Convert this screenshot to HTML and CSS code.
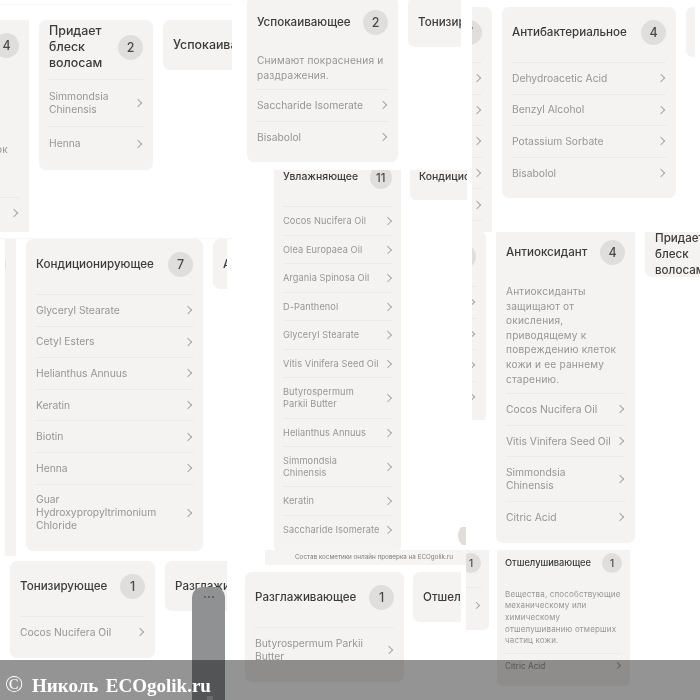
FILE: index.html
```html
<!DOCTYPE html>
<html lang="ru">
<head>
  <meta charset="UTF-8" />
  <title>Состав косметики онлайн</title>
  <link rel="stylesheet" href="styles.css">
</head>
<body>
  <div class="canvas">

    <!-- top left screenshot -->
    <div class="shot shot-a">
      <div class="card w139 cut-110 card-short">
        <div class="card-head"><span class="badge">4</span></div>
        <p class="desc desc-tail">клеток</p>
        <div class="row"></div>
      </div>
      <div class="card w114">
        <div class="card-head"><span class="title title-tall">Придает<br>блеск<br>волосам</span><span class="badge">2</span></div>
        <div class="row"><span>Simmondsia<br>Chinensis</span></div>
        <div class="row"><span>Henna</span></div>
      </div>
      <div class="card card-closed w151"><div class="card-head"><span class="title">Успокаивающее</span></div></div>
    </div>

    <!-- moisturising list, goes under the soothing card -->
    <div class="shot shot-c">
      <div class="card w127">
        <div class="card-head"><span class="title">Увлажняющее</span><span class="badge">11</span></div>
        <div class="row"><span>Cocos Nucifera Oil</span></div>
        <div class="row"><span>Olea Europaea Oil</span></div>
        <div class="row"><span>Argania Spinosa Oil</span></div>
        <div class="row"><span>D-Panthenol</span></div>
        <div class="row"><span>Glyceryl Stearate</span></div>
        <div class="row"><span>Vitis Vinifera Seed Oil</span></div>
        <div class="row"><span>Butyrospermum<br>Parkii Butter</span></div>
        <div class="row"><span>Helianthus Annuus</span></div>
        <div class="row"><span>Simmondsia<br>Chinensis</span></div>
        <div class="row"><span>Keratin</span></div>
        <div class="row"><span>Saccharide Isomerate</span></div>
      </div>
      <div class="card card-closed w151"><div class="card-head"><span class="title">Кондиционирующее</span></div></div>
    </div>
    <div class="shot shot-c-badge"><span class="badge"></span></div>

    <div class="shot shot-b">
      <div class="card w151">
        <div class="card-head"><span class="title">Успокаивающее</span><span class="badge">2</span></div>
        <p class="desc">Снимают покраснения и раздражения.</p>
        <div class="row"><span>Saccharide Isomerate</span></div>
        <div class="row"><span>Bisabolol</span></div>
      </div>
      <div class="card card-closed w145"><div class="card-head"><span class="title">Тонизирующее</span></div></div>
    </div>

    <div class="source-strip">Состав косметики онлайн проверка на ECOgolik.ru</div>

    <!-- right column slivers -->
    <div class="shot shot-e">
      <div class="card w177 cut-157">
        <div class="card-head"><span class="badge">7</span></div>
        <div class="row"></div>
        <div class="row"></div>
        <div class="row"></div>
        <div class="row"></div>
        <div class="row"></div>
        <div class="row"></div>
      </div>
    </div>
    <div class="shot shot-f">
      <div class="card w174 cut-160">
        <div class="card-head"><span class="badge"></span></div>
        <div class="row"></div>
        <div class="row"></div>
        <div class="row"></div>
        <div class="row"></div>
      </div>
    </div>

    <div class="shot shot-g">
      <div class="card w174">
        <div class="card-head"><span class="title">Антибактериальное</span><span class="badge">4</span></div>
        <div class="row"><span>Dehydroacetic Acid</span></div>
        <div class="row"><span>Benzyl Alcohol</span></div>
        <div class="row"><span>Potassium Sorbate</span></div>
        <div class="row"><span>Bisabolol</span></div>
      </div>
      <div class="card card-closed w114"></div>
    </div>

    <div class="shot shot-h">
      <div class="card w139 card-up">
        <div class="card-head"><span class="title">Антиоксидант</span><span class="badge">4</span></div>
        <p class="desc">Антиоксиданты защищают от окисления, приводящему к повреждению клеток кожи и ее раннему старению.</p>
        <div class="row"><span>Cocos Nucifera Oil</span></div>
        <div class="row"><span>Vitis Vinifera Seed Oil</span></div>
        <div class="row"><span>Simmondsia<br>Chinensis</span></div>
        <div class="row"><span>Citric Acid</span></div>
      </div>
      <div class="card card-closed card-up w114"><div class="card-head"><span class="title title-tall">Придает<br>блеск<br>волосам</span></div></div>
    </div>

    <!-- bottom row -->
    <div class="shot shot-i">
      <div class="card w127 cut-104">
        <div class="card-head"><span class="badge">1</span></div>
        <div class="row row-double"></div>
      </div>
      <div class="card w133">
        <div class="card-head"><span class="title">Отшелушивающее</span><span class="badge">1</span></div>
        <p class="desc">Вещества, способствующие<br>механическому или<br>химическому<br>отшелушиванию отмерших<br>частиц кожи.</p>
        <div class="row"><span>Citric Acid</span></div>
      </div>
    </div>

    <div class="shot shot-j">
      <div class="card w159">
        <div class="card-head"><span class="title">Разглаживающее</span><span class="badge">1</span></div>
        <div class="row"><span>Butyrospermum Parkii<br>Butter</span></div>
      </div>
      <div class="card card-closed w133"><div class="card-head"><span class="title">Отшелушивающее</span></div></div>
    </div>

    <div class="shot shot-k">
      <div class="card w100 cut-89">
        <div class="card-head"><span class="badge"></span></div>
      </div>
    </div>

    <div class="shot shot-l">
      <div class="card w177">
        <div class="card-head"><span class="title">Кондиционирующее</span><span class="badge">7</span></div>
        <div class="row"><span>Glyceryl Stearate</span></div>
        <div class="row"><span>Cetyl Esters</span></div>
        <div class="row"><span>Helianthus Annuus</span></div>
        <div class="row"><span>Keratin</span></div>
        <div class="row"><span>Biotin</span></div>
        <div class="row"><span>Henna</span></div>
        <div class="row"><span>Guar<br>Hydroxypropyltrimonium<br>Chloride</span></div>
      </div>
      <div class="card card-closed w139"><div class="card-head"><span class="title">Антиоксидант</span></div></div>
    </div>

    <div class="shot shot-m">
      <div class="card w145">
        <div class="card-head"><span class="title">Тонизирующее</span><span class="badge">1</span></div>
        <div class="row"><span>Cocos Nucifera Oil</span></div>
      </div>
      <div class="card card-closed w159"><div class="card-head"><span class="title">Разглаживающее</span></div></div>
    </div>

    <!-- phone scroll handle and watermark lie over everything -->
    <div class="handle"><span class="handle-dots"></span></div>
    <div class="watermark"><span class="copy">©</span> Николь&nbsp; ECOgolik.ru</div>
  </div>
</body>
</html>
```

FILE: styles.css
```css
* {
  box-sizing: border-box;
}

body {
  margin: 0;
  background: #fff;
}

.canvas {
  position: relative;
  width: 700px;
  height: 700px;
  overflow: hidden;
  background: #fff;
  font-family: Inter, 'Noto Sans', sans-serif;
  filter: blur(0.4px);
}

/* each pasted screenshot clips a row of cards */
.shot {
  --u: 1px;
  position: absolute;
  display: flex;
  align-items: flex-start;
  gap: 10px;
  overflow: hidden;
  background: #fff;
}

.card {
  flex: none;
  padding: 0 calc(10 * var(--u)) calc(10 * var(--u));
  background: #f4f3f2;
  border-radius: calc(7 * var(--u));
}

.card-closed {
  height: calc(50 * var(--u));
  overflow: hidden;
}

.card-short {
  height: 212px;
  overflow: hidden;
  border-radius: 0;
}

.card-up {
  margin-top: -5px;
}

.w100 { width: 100px; }
.w114 { width: 114px; }
.w127 { width: 127px; }
.w133 { width: 133px; }
.w139 { width: 139px; }
.w145 { width: 145px; }
.w151 { width: 151px; }
.w159 { width: 159px; }
.w174 { width: 174px; }
.w177 { width: 177px; }

.cut-89 { margin-left: -89px; }
.cut-104 { margin-left: -104px; }
.cut-110 { margin-left: -110px; }
.cut-157 { margin-left: -157px; }
.cut-160 { margin-left: -160px; }

.card-head {
  display: flex;
  align-items: center;
  min-height: calc(55 * var(--u));
  padding-bottom: calc(5 * var(--u));
}

.title {
  font-size: calc(11.6 * var(--u));
  line-height: calc(16 * var(--u));
  font-weight: 500;
  color: #3b3b3b;
  white-space: nowrap;
}

.title-tall {
  padding: 3px 0;
}

.badge {
  flex: none;
  display: flex;
  align-items: center;
  justify-content: center;
  width: calc(25 * var(--u));
  height: calc(25 * var(--u));
  margin-left: auto;
  border-radius: 50%;
  background: #dfdedc;
  font-size: calc(12.5 * var(--u));
  font-weight: 500;
  color: #4a4a4a;
}

.desc {
  margin: 0;
  padding: calc(2 * var(--u)) 0 calc(7 * var(--u));
  font-size: calc(10.1 * var(--u));
  line-height: calc(14.6 * var(--u));
  letter-spacing: 0.02em;
  color: #969696;
}

.desc-tail {
  padding: 67px 11px 40px 0;
  text-align: right;
}

.row {
  display: flex;
  align-items: center;
  justify-content: space-between;
  min-height: calc(31.6 * var(--u));
  padding: calc(8.8 * var(--u)) calc(2 * var(--u)) calc(8.8 * var(--u)) 0;
  border-top: 1px solid #ebeae8;
  font-size: calc(10.3 * var(--u));
  line-height: calc(13 * var(--u));
  color: #969696;
  white-space: nowrap;
}

.row::after {
  content: "";
  flex: none;
  width: calc(5 * var(--u));
  height: calc(5 * var(--u));
  margin-left: auto;
  border-top: 1px solid #a5a5a5;
  border-right: 1px solid #a5a5a5;
  transform: rotate(45deg);
}

.row-double {
  min-height: calc(44 * var(--u));
}

/* screenshot positions on the collage */
.shot-a {
  left: 0;
  top: 4px;
  width: 232px;
  height: 235px;
  padding-top: 15px;
  border-top: 1px solid #f7f7f7;
  border-bottom: 1px solid #f7f7f7;
}

.shot-a .title {
  font-size: 12.4px;
}

.shot-a .row {
  padding-top: 10px;
  padding-bottom: 10px;
}

.shot-b {
  left: 232px;
  top: -3px;
  width: 229px;
  height: 173px;
  padding-left: 15px;
}

.shot-b .desc {
  padding-top: 1px;
}

.shot-c {
  --u: 0.9px;
  left: 265px;
  top: 170px;
  width: 202px;
  height: 380px;
  gap: 9px;
  padding-left: 9px;
}

.shot-c .card {
  margin-top: -15px;
}

.shot-c .card-head {
  min-height: calc(57 * var(--u));
  padding-bottom: calc(7 * var(--u));
}

.shot-c .row {
  font-size: 9.2px;
  letter-spacing: 0.01em;
}

.shot-c-badge {
  left: 458px;
  top: 527px;
  width: 8px;
  height: 18px;
}

.shot-c-badge .badge {
  margin-top: -4px;
}

.source-strip {
  position: absolute;
  left: 265px;
  top: 550px;
  width: 201px;
  height: 15px;
  padding-left: 30px;
  background: #f5f4f3;
  font-size: 6.3px;
  line-height: 14px;
  color: #7c7c7c;
  white-space: nowrap;
}

.shot-e {
  left: 472px;
  top: 7px;
  width: 20px;
  height: 225px;
}

.shot-f {
  left: 472px;
  top: 232px;
  width: 14px;
  height: 188px;
}

.shot-f .card {
  margin-top: -1px;
}

.shot-g {
  left: 502px;
  top: 7px;
  width: 193px;
  height: 200px;
}

.shot-h {
  left: 496px;
  top: 232px;
  width: 204px;
  height: 318px;
}

.shot-i {
  --u: 0.8px;
  left: 466px;
  top: 550px;
  width: 170px;
  height: 140px;
  gap: 8px;
}

.shot-i .card {
  margin-top: -7px;
}

.shot-i .desc {
  font-size: 8px;
  white-space: nowrap;
}

.shot-j {
  left: 245px;
  top: 572px;
  width: 216px;
  height: 112px;
  gap: 9px;
}

.shot-k {
  left: 5px;
  top: 239px;
  width: 11px;
  height: 317px;
}

.shot-k .card {
  height: 317px;
  border-radius: 0;
}

.shot-l {
  left: 26px;
  top: 239px;
  width: 201px;
  height: 314px;
}

.shot-m {
  left: 10px;
  top: 561px;
  width: 217px;
  height: 100px;
}

.handle {
  position: absolute;
  left: 192px;
  top: 587px;
  width: 33px;
  height: 113px;
  background: #909193;
  border-radius: 10px 10px 0 0;
}

.handle-dots {
  display: block;
  width: 2px;
  height: 2px;
  margin: 9px auto 0;
  border-radius: 50%;
  background: #5a5a5a;
  box-shadow: -4px 0 #5a5a5a, 4px 0 #5a5a5a;
}

/* small light mark at the bottom of the handle */
.handle::after {
  content: "";
  position: absolute;
  left: 15px;
  bottom: 0;
  width: 6px;
  height: 4px;
  background: #b9b9b9;
}

.watermark {
  position: absolute;
  left: 0;
  top: 660px;
  width: 700px;
  height: 40px;
  padding: 7px 0 0 5px;
  background: rgba(0, 0, 0, 0.42);
  font-family: 'Liberation Serif', serif;
  font-size: 19px;
  line-height: 34px;
  font-weight: 700;
  word-spacing: -1px;
  color: #fff;
  white-space: nowrap;
}

.copy {
  font-size: 24px;
  font-weight: 400;
  margin-right: 5px;
}
```
